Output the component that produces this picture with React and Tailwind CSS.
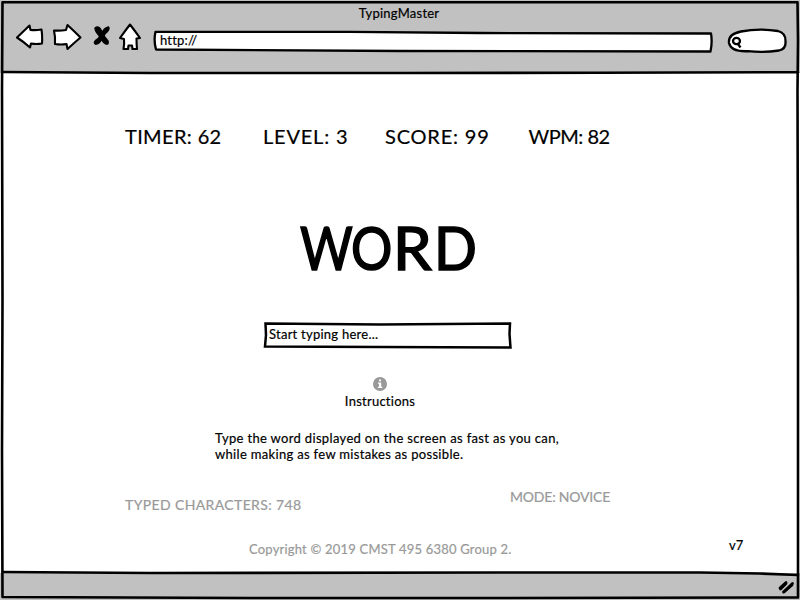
import React from "react";

const stats = [
  { text: "TIMER: 62", cls: "w-[138px] tracking-[0.35px]" },
  { text: "LEVEL: 3", cls: "w-[122px] tracking-[0.8px]" },
  { text: "SCORE: 99", cls: "w-[143.5px] tracking-[0.8px]" },
  { text: "WPM: 82", cls: "w-[90px] tracking-[-0.5px]" },
];

function NavIcons() {
  return (
    <svg className="block h-[32px] w-[128px]" viewBox="16 21 128 32" fill="white" stroke="black" strokeWidth="2.1" strokeLinejoin="round" strokeLinecap="round">
      <path d="M17 37.5 L29.5 25.5 L30.5 30 Q36 30.5 41.5 29.5 Q42.5 36 42 43.5 Q36 44.5 31 43.5 L30 47.5 Q24 42 17 37.5Z" />
      <path d="M54 30.5 Q60 31 66 30 L67.5 25 Q74 31 80.5 37.5 Q74 43 67.5 49 L66.5 44 Q61 45 55 44 Q55.5 37 54 30.5Z" />
      <path fill="black" strokeWidth="1.4" d="M95 28 Q98 25.500 100.500 29 L102.300 32.500 Q104 28 108.500 27 Q110 29 107 32 Q104.500 34 104 36 L108 41 Q109 44.500 106 44 Q103 42.500 101.500 39.500 Q99.500 44 95.500 44.200 Q93 43 96 40 Q99.500 38 99.500 36 Q95 31.500 95 28Z" />
      <path d="M130 24.500 Q135 31 140 38 L136.500 38.500 Q136.500 44 137 49 L132.500 49 L132 45.500 L128.500 45.500 L128 49 L123.500 49 Q124.500 44 124 39 L120 38 Q125 31 130 24.500Z" />
    </svg>
  );
}

function SketchFrame() {
  return (
    <svg className="pointer-events-none absolute inset-0 h-[600px] w-[800px]" viewBox="0 0 800 600" fill="none" stroke="black" strokeWidth="2.6" strokeLinecap="round" strokeLinejoin="round">
      <path d="M2.500 2.200 L400 2.200 L797.500 2.200 L798 40 L797.500 90 L798 300 L798 597.500 L500 598 L250 598 L2.500 597 L2 450 L2.500 300 L2 90Z" />
      <path d="M3 72 L150 73 L400 73 L600 72.800 L798 72.200" />
      <path d="M3 572 L150 573 L500 572.500 L700 572.500 L760 573.500 L798 575" />
    </svg>
  );
}

export default function App() {
  return (
    <div className="relative flex h-[600px] w-[800px] flex-col overflow-hidden bg-white font-['Lato',sans-serif] text-[13px] leading-4 text-black [-webkit-text-stroke:0.2px_currentColor]">
      <header className="h-[73px] bg-[#c1c1c1]">
        <div className="pt-[5px] text-center tracking-[0.25px]">
          <span className="mr-[2px]">TypingMaster</span>
        </div>
        <div className="flex pl-4">
          <NavIcons />
          <div className="mt-[9px] ml-[9px] grid h-[23px] w-[561px]">
            <svg className="col-start-1 row-start-1 h-[23px] w-[561px]" viewBox="153 30 561 23" fill="white" stroke="black" strokeWidth="2.300" strokeLinejoin="round">
              <path d="M155.500 31.800 L350 31.800 L480 33 L711 33.500 Q712.500 42 710.500 51.500 L400 51 L156 49.500 Q153.500 41 155.500 31.800Z" />
            </svg>
            <span className="col-start-1 row-start-1 pt-[2px] pl-[7px] tracking-[0.2px]">http://</span>
          </div>
          <svg className="mt-[6px] ml-[12px] h-[28px] w-[62px]" viewBox="726 27 62 28" fill="white" stroke="black" strokeWidth="2.300">
            <path d="M741 31.500 Q759 28 778 31 Q786 33 785.500 42 Q786 49 779 50.500 Q764 53 748 51.200 Q731 52 729 43 Q728 34 741 31.500Z" />
            <ellipse cx="736.500" cy="41" rx="3.500" ry="3.200" />
            <path d="M738 44 L740.500 47.500" />
          </svg>
        </div>
      </header>

      <main className="h-[500px] pl-[125px]">
        <div className="flex pt-[51px] text-[20px] leading-6 whitespace-nowrap">
          {stats.map((s) => (
            <span key={s.text} className={s.cls}>{s.text}</span>
          ))}
        </div>
        <h1 className="mt-[63px] ml-[175px] flex h-[72px] text-[60px] leading-[72px] [paint-order:stroke] [stroke-linejoin:round] [-webkit-text-stroke:1.6px_black]">
          <span className="w-[51px] origin-left scale-x-[0.85]">W</span>
          <span className="w-[42px] origin-left scale-x-[0.86]">O</span>
          <span className="w-[41px] origin-left scale-x-[1.03]">R</span>
          <span className="w-[44px] origin-left scale-x-[0.94]">D</span>
        </h1>
        <div className="mt-[38px] ml-[138px] grid h-[29px] w-[250px]">
          <svg className="col-start-1 row-start-1 h-[29px] w-[250px]" viewBox="263 321 250 29" fill="white" stroke="black" strokeWidth="2.500">
            <path d="M265.500 323.500 L380 324.500 L510 323.500 L509.500 334 L510.500 347.500 L380 347 L265 346.500 L266 335Z" />
          </svg>
          <span className="col-start-1 row-start-1 pt-[5px] pl-[6px] tracking-[0.25px]">Start typing here...</span>
        </div>
        <div className="mt-[27px] ml-[205px] flex w-[100px] flex-col items-center">
          <svg className="h-[14px] w-[14px]" viewBox="0 0 14 14">
            <circle cx="7" cy="7" r="7" fill="#999" />
            <path d="M6 2.500 H8 V4.300 H6Z M5 5.500 H8.200 V9.800 H9.300 V11 H4.900 V9.800 H6 V6.700 H5Z" fill="white" />
          </svg>
          <span className="mt-[2px] tracking-[0.25px]">Instructions</span>
        </div>
        <p className="mt-[21px] ml-[90px] whitespace-nowrap">
          <span className="block tracking-[0.335px]">Type the word displayed on the screen as fast as you can,</span>
          <span className="block tracking-[0.32px]">while making as few mistakes as possible.</span>
        </p>
        <div className="mt-[26px] flex h-[26px] text-[14px] leading-[18px] whitespace-nowrap text-[#999]">
          <span className="w-[385px] pt-[8px] tracking-[0.37px]">TYPED CHARACTERS: 748</span>
          <span className="tracking-[-0.2px]">MODE: NOVICE</span>
        </div>
        <div className="mt-[23px] flex whitespace-nowrap">
          <span className="ml-[124px] w-[480px] pt-[4px] tracking-[0.2px] text-[#999]">Copyright © 2019 CMST 495 6380 Group 2.</span>
          <span>v7</span>
        </div>
      </main>

      <footer className="flex flex-1 justify-end bg-[#c1c1c1]">
        <svg className="mt-[6px] mr-[5px] h-[16px] w-[18px]" viewBox="777 579 18 16" fill="none" stroke="black" strokeWidth="2.800" strokeLinecap="round">
          <path d="M786 582.500 L780 588 M792.500 583.500 L783.500 592 M786 583.500 L780.500 589 M792 585 L784 592" />
        </svg>
      </footer>
      <SketchFrame />
    </div>
  );
}
